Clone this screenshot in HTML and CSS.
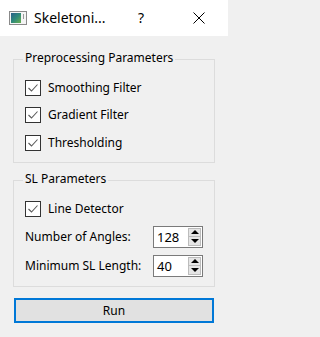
FILE: index.html
```html
<!DOCTYPE html>
<html>
<head>
<meta charset="utf-8">
<link rel="stylesheet" href="styles.css">
</head>
<body>
<div class="window">
  <div class="titlebar">
    <svg class="app-icon" width="18" height="14" viewBox="0 0 18 14">
      <defs>
        <linearGradient id="g" x1="0" y1="0" x2="1" y2="1">
          <stop offset="0" stop-color="#2a5f8a"/>
          <stop offset="0.5" stop-color="#2f8a7a"/>
          <stop offset="1" stop-color="#6ab04c"/>
        </linearGradient>
      </defs>
      <rect x="0.5" y="0.5" width="17" height="13" fill="#f4f4f4" stroke="#8a8a8a"/>
      <rect x="2" y="2" width="10" height="10" fill="url(#g)"/>
      <rect x="14" y="3" width="1" height="5" fill="#9a9a9a"/>
    </svg>
    <div class="title">Skeletoni...</div>
    <div class="tb-btn help">?</div>
    <div class="tb-btn close">
      <svg width="12" height="12" viewBox="0 0 12 12"><path d="M0.5 0.5 L11.5 11.5 M11.5 0.5 L0.5 11.5" stroke="#000" stroke-width="1" fill="none"/></svg>
    </div>
  </div>
  <div class="content">
    <div class="group first">
      <div class="legend">Preprocessing Parameters</div>
      <div class="check-row"><span class="box"><svg width="14" height="14" viewBox="0 0 14 14"><path d="M2.5 7 L5.5 10 L11.5 3.5" stroke="#5a5a5a" stroke-width="1.1" fill="none"/></svg></span><span>Smoothing Filter</span></div>
      <div class="check-row"><span class="box"><svg width="14" height="14" viewBox="0 0 14 14"><path d="M2.5 7 L5.5 10 L11.5 3.5" stroke="#5a5a5a" stroke-width="1.1" fill="none"/></svg></span><span>Gradient Filter</span></div>
      <div class="check-row"><span class="box"><svg width="14" height="14" viewBox="0 0 14 14"><path d="M2.5 7 L5.5 10 L11.5 3.5" stroke="#5a5a5a" stroke-width="1.1" fill="none"/></svg></span><span>Thresholding</span></div>
    </div>
    <div class="group second">
      <div class="legend">SL Parameters</div>
      <div class="check-row"><span class="box"><svg width="14" height="14" viewBox="0 0 14 14"><path d="M2.5 7 L5.5 10 L11.5 3.5" stroke="#5a5a5a" stroke-width="1.1" fill="none"/></svg></span><span>Line Detector</span></div>
      <div class="spin-row">
        <span class="spin-label">Number of Angles:</span>
        <div class="spinbox"><span class="spin-value">128</span><div class="spin-btns"><div class="sb up"><span class="tri-up"></span></div><div class="sb down"><span class="tri-down"></span></div></div></div>
      </div>
      <div class="spin-row">
        <span class="spin-label">Minimum SL Length:</span>
        <div class="spinbox"><span class="spin-value">40</span><div class="spin-btns"><div class="sb up"><span class="tri-up"></span></div><div class="sb down"><span class="tri-down"></span></div></div></div>
      </div>
    </div>
    <div class="run">Run</div>
  </div>
</div>
</body>
</html>
```

FILE: styles.css
```css
html, body {
  margin: 0;
  padding: 0;
}
body {
  width: 228px;
  height: 337px;
  background: #f0f0f0;
  font-family: "Noto Sans", "Open Sans", sans-serif;
  font-size: 12px;
  color: #000;
  overflow: hidden;
}
.titlebar {
  height: 36px;
  background: #ffffff;
  display: flex;
  align-items: center;
}
.app-icon {
  margin-left: 9px;
  margin-right: 7px;
  flex: none;
}
.title {
  flex: 1;
  font-size: 14px;
  line-height: 20px;
}
.tb-btn {
  width: 58px;
  height: 36px;
  display: flex;
  align-items: center;
  justify-content: center;
  font-size: 14px;
}
.help {
  padding-bottom: 1px;
}
.close svg {
  display: block;
}
.content {
  padding: 0 13px;
}
.group {
  border: 1px solid #dcdcdc;
  padding: 0 11px 6px 11px;
}
.group.first {
  margin-top: 23px;
}
.group.second {
  margin-top: 17px;
}
.legend {
  margin: -10px 0 0 -2px;
  padding: 0 2px;
  width: fit-content;
  background: #f0f0f0;
  line-height: 16px;
  margin-bottom: 7.5px;
}
.check-row {
  height: 27.5px;
  display: flex;
  align-items: center;
}
.box {
  width: 14px;
  height: 14px;
  border: 1px solid #333;
  background: #fff;
  margin-right: 7px;
  flex: none;
  position: relative;
  top: 0.5px;
}
.box svg {
  display: block;
}
.spin-row {
  height: 29px;
  display: flex;
  align-items: center;
}
.spin-label {
  width: 128px;
  flex: none;
}
.spinbox {
  width: 49px;
  height: 20px;
  border: 1px solid #7a7a7a;
  background: #fff;
  display: flex;
  align-items: stretch;
}
.spin-value {
  flex: 1;
  padding-left: 3px;
  line-height: 20px;
  font-size: 13px;
}
.spin-btns {
  width: 13px;
  margin: 1px;
  display: flex;
  flex-direction: column;
}
.sb {
  flex: 1;
  background: #e5e5e5;
  border: 1px solid #bcbcbc;
  display: flex;
  align-items: center;
  justify-content: center;
}
.sb.down {
  border-top: none;
}
.tri-up {
  width: 0;
  height: 0;
  border-left: 4px solid transparent;
  border-right: 4px solid transparent;
  border-bottom: 4px solid #000;
}
.tri-down {
  width: 0;
  height: 0;
  border-left: 4px solid transparent;
  border-right: 4px solid transparent;
  border-top: 4px solid #000;
}
.run {
  margin: 11px 1px 0 1px;
  height: 21px;
  border: 2px solid #0078d7;
  background: #e1e1e1;
  text-align: center;
  line-height: 21px;
}
```
